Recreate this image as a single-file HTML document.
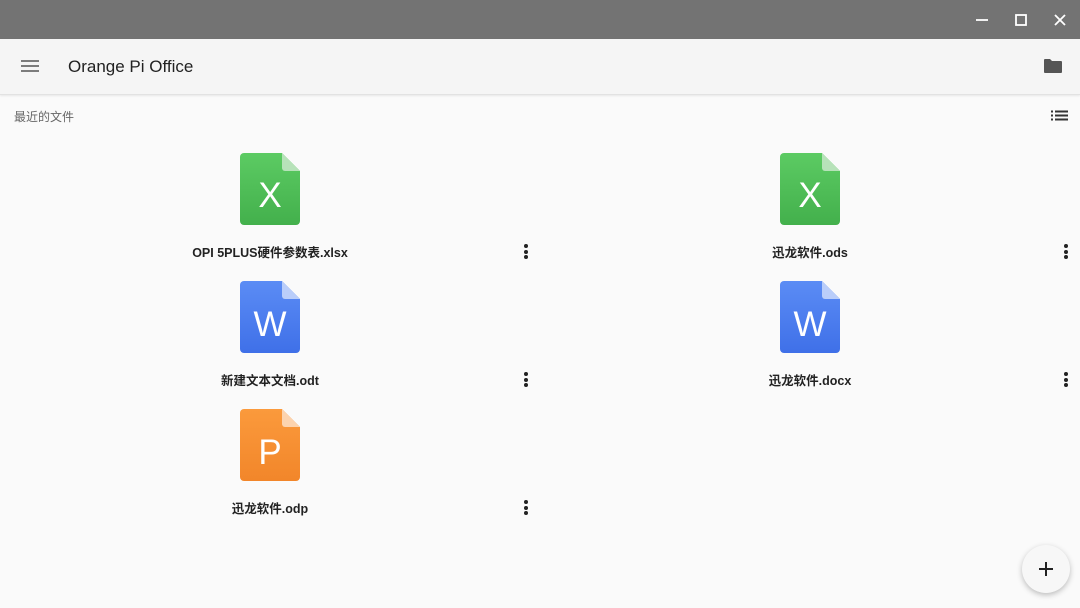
<!DOCTYPE html><html><head><meta charset="utf-8"><style>
body{margin:0;width:1080px;height:608px;background:#fafafa;font-family:"Liberation Sans","Noto Sans CJK SC",sans-serif;position:relative;overflow:hidden}
.tb{position:absolute;left:0;top:0;width:1080px;height:39px;background:#737373}
.ab{position:absolute;left:0;top:39px;width:1080px;height:55px;background:#f5f5f5;border-bottom:1px solid #e2e2e2;box-shadow:0 1px 2px rgba(0,0,0,.08)}
.t{position:absolute;left:68px;top:57px;font-size:17px;color:#222}
.sub{position:absolute;left:14px;top:108px;font-size:12px;color:#666}
.ic{position:absolute;width:60px;height:72px}
.lb{position:absolute;width:300px;text-align:center;font-size:12.5px;font-weight:bold;color:#222}
.dots{position:absolute;width:4px}
.dots i{display:block;width:4px;height:4px;border-radius:2px;background:#222;margin-bottom:1.5px}
.fab{position:absolute;left:1022px;top:545px;width:48px;height:48px;border-radius:50%;background:#f7f7f7;box-shadow:0 2px 6px rgba(0,0,0,.25)}
</style></head><body>
<div class="tb"></div>
<svg style="position:absolute;left:970px;top:8px" width="110" height="24"><path d="M6 12h12" stroke="#fff" stroke-width="1.8"/><rect x="46" y="7" width="10" height="10" fill="none" stroke="#fff" stroke-width="1.8"/><path d="M85 7l10 10M95 7l-10 10" stroke="#fff" stroke-width="1.8"/></svg>
<div class="ab"></div>
<svg style="position:absolute;left:21px;top:59px" width="18" height="14"><path d="M0 2h18M0 7h18M0 12h18" stroke="#555" stroke-width="1.6"/></svg>
<div class="t">Orange Pi Office</div>
<svg style="position:absolute;left:1044px;top:58px" width="18" height="16"><path d="M0 2a1 1 0 0 1 1-1h5l2 2h9a1 1 0 0 1 1 1v10a1 1 0 0 1-1 1H1a1 1 0 0 1-1-1z" fill="#555"/></svg>
<div class="sub">最近的文件</div>
<svg style="position:absolute;left:1051px;top:110px" width="17" height="12"><path d="M0 1.5h2M4 1.5h13M0 5.5h2M4 5.5h13M0 9.5h2M4 9.5h13" stroke="#333" stroke-width="2"/></svg>

<svg width="0" height="0" style="position:absolute"><defs>
<linearGradient id="g" x1="0" y1="0" x2="0" y2="1"><stop offset="0" stop-color="#5ccb63"/><stop offset="1" stop-color="#43b04c"/></linearGradient>
<linearGradient id="b" x1="0" y1="0" x2="0" y2="1"><stop offset="0" stop-color="#5b8cf5"/><stop offset="1" stop-color="#3f70e8"/></linearGradient>
<linearGradient id="o" x1="0" y1="0" x2="0" y2="1"><stop offset="0" stop-color="#fb9a3c"/><stop offset="1" stop-color="#f2862a"/></linearGradient>
</defs></svg>

<svg class="ic" style="left:240px;top:153px" viewBox="0 0 60 72"><path d="M4 0h38l18 18v50a4 4 0 0 1-4 4H4a4 4 0 0 1-4-4V4a4 4 0 0 1 4-4z" fill="url(#g)"/><path d="M42 0l18 18H45a3 3 0 0 1-3-3z" fill="#b7e2b9"/><text x="30" y="54" text-anchor="middle" font-size="35" fill="#fff" font-family="Liberation Sans">X</text></svg>
<svg class="ic" style="left:780px;top:153px" viewBox="0 0 60 72"><path d="M4 0h38l18 18v50a4 4 0 0 1-4 4H4a4 4 0 0 1-4-4V4a4 4 0 0 1 4-4z" fill="url(#g)"/><path d="M42 0l18 18H45a3 3 0 0 1-3-3z" fill="#b7e2b9"/><text x="30" y="54" text-anchor="middle" font-size="35" fill="#fff" font-family="Liberation Sans">X</text></svg>
<svg class="ic" style="left:240px;top:281px" viewBox="0 0 60 72"><path d="M4 0h38l18 18v50a4 4 0 0 1-4 4H4a4 4 0 0 1-4-4V4a4 4 0 0 1 4-4z" fill="url(#b)"/><path d="M42 0l18 18H45a3 3 0 0 1-3-3z" fill="#b9cdfa"/><text x="30" y="55" text-anchor="middle" font-size="35" fill="#fff" font-family="Liberation Sans">W</text></svg>
<svg class="ic" style="left:780px;top:281px" viewBox="0 0 60 72"><path d="M4 0h38l18 18v50a4 4 0 0 1-4 4H4a4 4 0 0 1-4-4V4a4 4 0 0 1 4-4z" fill="url(#b)"/><path d="M42 0l18 18H45a3 3 0 0 1-3-3z" fill="#b9cdfa"/><text x="30" y="55" text-anchor="middle" font-size="35" fill="#fff" font-family="Liberation Sans">W</text></svg>
<svg class="ic" style="left:240px;top:409px" viewBox="0 0 60 72"><path d="M4 0h38l18 18v50a4 4 0 0 1-4 4H4a4 4 0 0 1-4-4V4a4 4 0 0 1 4-4z" fill="url(#o)"/><path d="M42 0l18 18H45a3 3 0 0 1-3-3z" fill="#fcd3ae"/><text x="30" y="55" text-anchor="middle" font-size="35" fill="#fff" font-family="Liberation Sans">P</text></svg>

<div class="lb" style="left:120px;top:242px">OPI 5PLUS硬件参数表.xlsx</div>
<div class="lb" style="left:660px;top:242px">迅龙软件.ods</div>
<div class="lb" style="left:120px;top:370px">新建文本文档.odt</div>
<div class="lb" style="left:660px;top:370px">迅龙软件.docx</div>
<div class="lb" style="left:120px;top:498px">迅龙软件.odp</div>

<div class="dots" style="left:524px;top:244px"><i></i><i></i><i></i></div>
<div class="dots" style="left:1064px;top:244px"><i></i><i></i><i></i></div>
<div class="dots" style="left:524px;top:372px"><i></i><i></i><i></i></div>
<div class="dots" style="left:1064px;top:372px"><i></i><i></i><i></i></div>
<div class="dots" style="left:524px;top:500px"><i></i><i></i><i></i></div>

<div class="fab"><svg style="position:absolute;left:17px;top:17px" width="14" height="14"><path d="M7 0v14M0 7h14" stroke="#222" stroke-width="2"/></svg></div>
</body></html>
